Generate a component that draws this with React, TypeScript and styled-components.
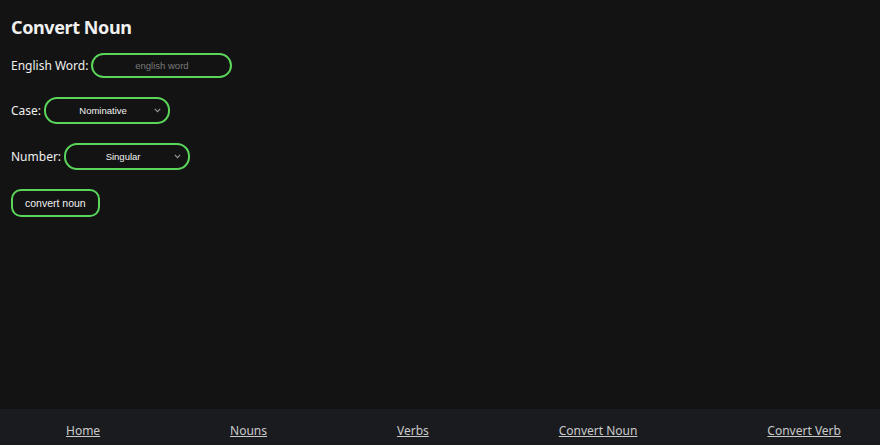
import { useState } from 'react';
import styled, { createGlobalStyle } from 'styled-components';

const GlobalStyle = createGlobalStyle`
  html, body {
    margin: 0;
    padding: 0;
    height: 100%;
    background: #131313;
  }
  #root {
    height: 100%;
  }
`;

const Page = styled.div`
  display: flex;
  flex-direction: column;
  height: 100vh;
  background: #131313;
  color: #f0f0f0;
  font-family: 'Noto Sans', 'Open Sans', sans-serif;
`;

const Main = styled.main`
  flex: 1;
  padding: 14px 11px;
`;

const Title = styled.h1`
  margin: 0 0 12px;
  font-size: 18px;
  font-weight: 700;
  letter-spacing: -0.4px;
  line-height: 26px;
`;

const Row = styled.div`
  display: flex;
  align-items: center;
  gap: 3px;
  height: 26px;
  margin-bottom: 19.5px;
`;

const Label = styled.label`
  font-size: 12px;
`;

const Input = styled.input`
  box-sizing: border-box;
  width: 141px;
  height: 25px;
  border: 2px solid #5ad55a;
  border-radius: 13px;
  background: transparent;
  color: #eee;
  font-family: 'Liberation Sans', Arial, sans-serif;
  font-size: 9.5px;
  text-align: center;
  outline: none;

  &::placeholder {
    color: #7a7a7a;
  }
`;

const SelectWrap = styled.div`
  position: relative;
  display: inline-flex;
`;

const Select = styled.select`
  box-sizing: border-box;
  width: 126px;
  height: 27px;
  border: 2px solid #5ad55a;
  border-radius: 13px;
  background: transparent;
  color: #f2f2f2;
  font-family: 'Liberation Sans', Arial, sans-serif;
  font-size: 9.5px;
  text-align: center;
  text-align-last: center;
  padding: 0 16px 0 8px;
  appearance: none;
  outline: none;
`;

const Chevron = styled.svg`
  position: absolute;
  right: 9px;
  top: 11px;
  pointer-events: none;
`;

const Button = styled.button`
  box-sizing: border-box;
  height: 28px;
  padding: 0 12px;
  border: 2px solid #5ad55a;
  border-radius: 10px;
  background: transparent;
  color: #f2f2f2;
  font-family: 'Liberation Sans', Arial, sans-serif;
  font-size: 10.5px;
  cursor: pointer;
`;

const Footer = styled.footer`
  display: flex;
  justify-content: space-between;
  align-items: center;
  height: 36px;
  padding: 0 39px 0 66px;
  background: #1a1b1f;
`;

const NavLink = styled.a`
  color: #c9c9c9;
  font-size: 12px;
  text-decoration: underline;
  padding-top: 6px;
`;

const cases = ['Nominative', 'Accusative', 'Genitive', 'Dative', 'Ablative', 'Vocative'];
const numbers = ['Singular', 'Plural'];
const links = ['Home', 'Nouns', 'Verbs', 'Convert Noun', 'Convert Verb'];

const Arrow = () => (
  <Chevron width="7" height="5" viewBox="0 0 7 5">
    <path d="M0.8 0.8 L3.5 3.6 L6.2 0.8" fill="none" stroke="#9a9a9a" strokeWidth="1.1" />
  </Chevron>
);

const App = () => {
  const [word, setWord] = useState('');
  const [nounCase, setNounCase] = useState('Nominative');
  const [number, setNumber] = useState('Singular');

  return (
    <Page>
      <GlobalStyle />
      <Main>
        <Title>Convert Noun</Title>
        <Row>
          <Label htmlFor="word">English Word:</Label>
          <Input id="word" placeholder="english word" value={word} onChange={(e) => setWord(e.target.value)} />
        </Row>
        <Row>
          <Label htmlFor="case">Case:</Label>
          <SelectWrap>
            <Select id="case" value={nounCase} onChange={(e) => setNounCase(e.target.value)}>
              {cases.map((c) => (
                <option key={c}>{c}</option>
              ))}
            </Select>
            <Arrow />
          </SelectWrap>
        </Row>
        <Row>
          <Label htmlFor="number">Number:</Label>
          <SelectWrap>
            <Select id="number" value={number} onChange={(e) => setNumber(e.target.value)}>
              {numbers.map((n) => (
                <option key={n}>{n}</option>
              ))}
            </Select>
            <Arrow />
          </SelectWrap>
        </Row>
        <Button type="button">convert noun</Button>
      </Main>
      <Footer>
        {links.map((l) => (
          <NavLink key={l} href="#">
            {l}
          </NavLink>
        ))}
      </Footer>
    </Page>
  );
};

export default App;
